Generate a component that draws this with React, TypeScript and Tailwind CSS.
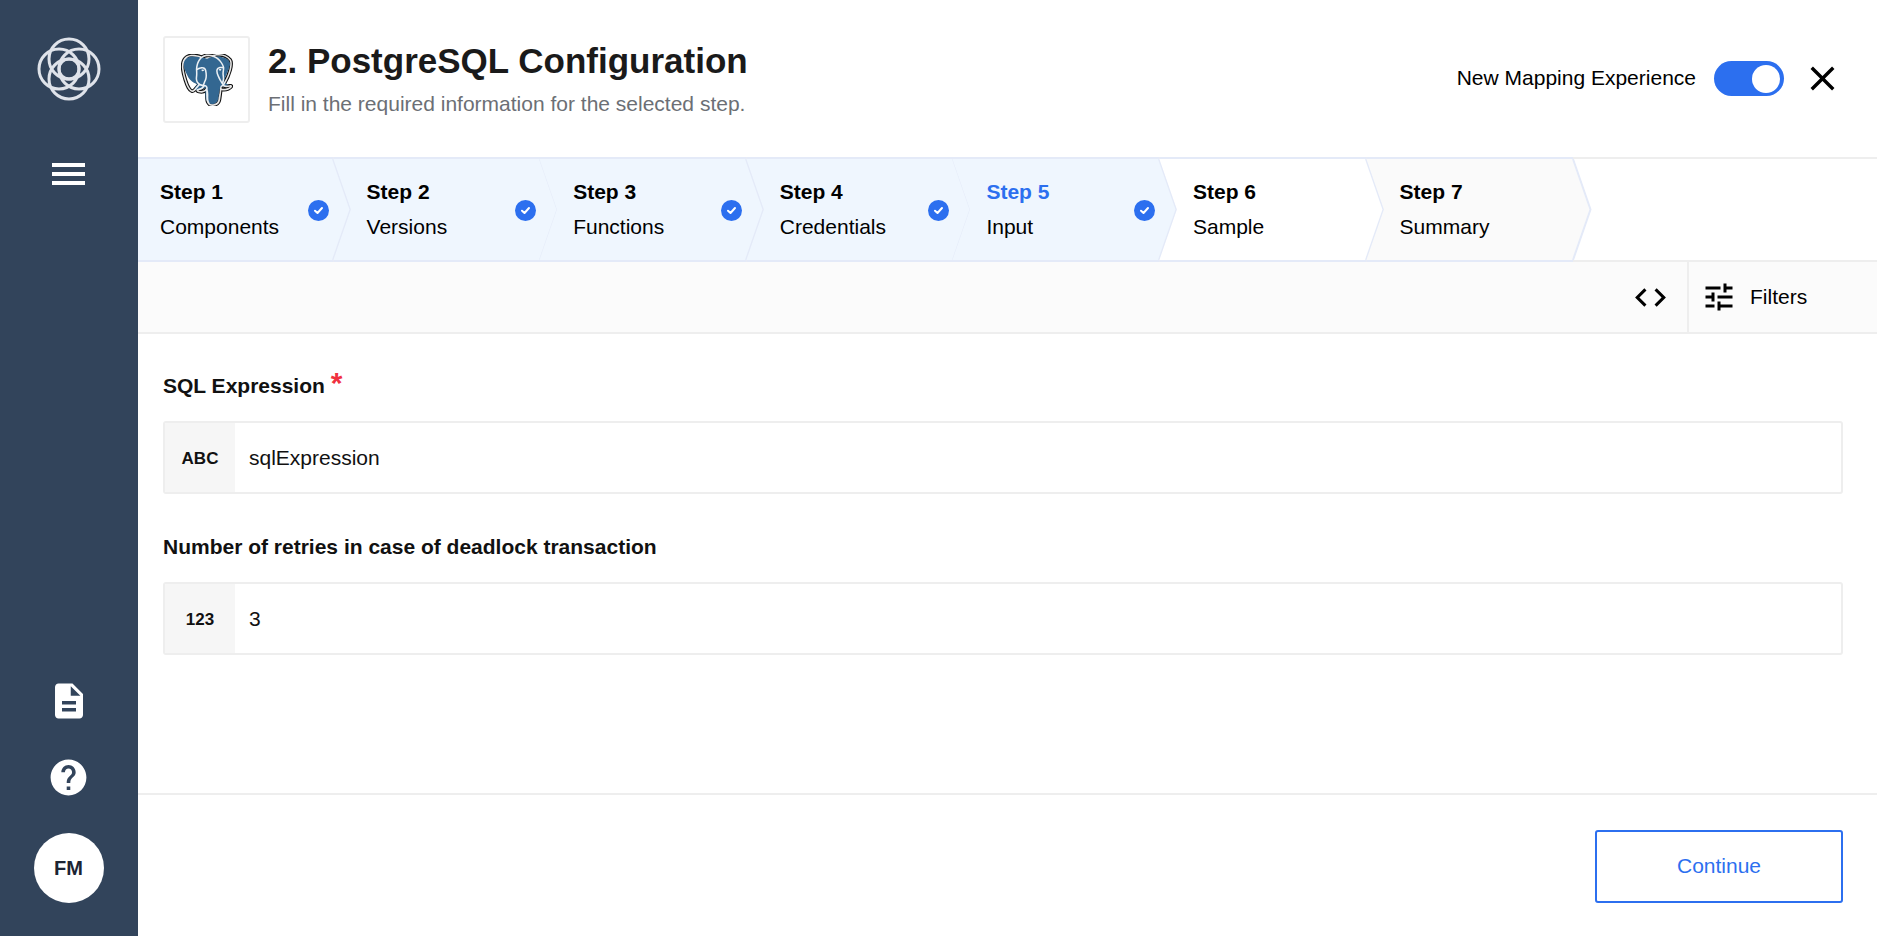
import { MdClose, MdCode, MdDescription, MdHelp, MdTune } from "react-icons/md";
import { SiPostgresql } from "react-icons/si";

type Step = {
  title: string;
  name: string;
  fill: string;
  done: boolean;
  active?: boolean;
};

const STEPS: Step[] = [
  { title: "Step 1", name: "Components", fill: "#eff6fe", done: true },
  { title: "Step 2", name: "Versions", fill: "#eff6fe", done: true },
  { title: "Step 3", name: "Functions", fill: "#eff6fe", done: true },
  { title: "Step 4", name: "Credentials", fill: "#eff6fe", done: true },
  { title: "Step 5", name: "Input", fill: "#eff6fe", done: true, active: true },
  { title: "Step 6", name: "Sample", fill: "#ffffff", done: false },
  { title: "Step 7", name: "Summary", fill: "#fafafa", done: false },
];

function RingsLogo() {
  return (
    <svg width="64" height="64" viewBox="0 0 64 64" fill="none" stroke="#dfe3ea" strokeWidth="3">
      <circle cx="32" cy="22" r="20" />
      <circle cx="32" cy="42" r="20" />
      <circle cx="22" cy="32" r="20" />
      <circle cx="42" cy="32" r="20" />
      <circle cx="32" cy="32" r="10" />
    </svg>
  );
}

function Elephant() {
  return (
    <div className="relative h-[52px] w-[52px]">
      <SiPostgresql size={52} className="absolute left-0 top-0 text-[#111111] [stroke:#111111] [stroke-width:1px]" />
      <svg className="absolute left-0 top-0" width="52" height="52" viewBox="0 0 54 54">
        <path
          d="M9 3C14 2 21 3 27 5C32 3 37 2 42 3C48 4 51 7 51 11C50 16 47 21 45 27C45 30 46 31 49 31.500C48 33 45 34 41 34C40 38 39 42 39 46C38 50 36 52 32 52C28 52 26 49 25.500 45C25 41 25.500 38 25.500 35C22 36 18 38 15 37C14 36 14 35 15 34C16 33 17 32 17 31C12 30 8 26 6 21C4 17 2 12 3 8C3.500 5 6 3.500 9 3Z"
          fill="#336791"
        />
      </svg>
      <SiPostgresql size={52} className="absolute left-0 top-0 text-white opacity-90" />
    </div>
  );
}

function StepCheck() {
  return (
    <span className="absolute left-[170px] top-[41px] flex h-[21px] w-[21px] items-center justify-center rounded-full bg-[#2c6fef]">
      <svg width="11" height="11" viewBox="0 0 11 11" fill="none" stroke="#ffffff" strokeWidth="2" strokeLinecap="round" strokeLinejoin="round">
        <path d="M2 5.700L4.500 8L9 3" />
      </svg>
    </span>
  );
}

function StepItem({ step, first }: { step: Step; first: boolean }) {
  const left = first ? 0 : -11.6;
  const notch = first ? "" : "5.900,50.500";
  const points = `${left},0 195,0 212.500,50.500 195,101 ${left},101 ${notch}`;

  return (
    <div className="relative h-full w-[206.6px] shrink-0 pl-[22px] pt-[20px]">
      <svg className="absolute left-0 top-0 overflow-visible" width="212" height="101" fill="none">
        <polygon points={points} fill={step.fill} />
        <path d={`M${left} -1H195M${left} 102H195`} stroke="#e4eaf8" strokeWidth="2" />
        <path d="M195 0L212.500 50.500L195 101" stroke="#e4eaf8" strokeWidth="2" />
      </svg>
      <div className={`relative text-[21px] font-bold leading-[26px] ${step.active ? "text-[#2c6fef]" : "text-black"}`}>
        {step.title}
      </div>
      <div className="relative mt-[9px] text-[21px] leading-[26px] text-black">{step.name}</div>
      {step.done ? <StepCheck /> : null}
    </div>
  );
}

function Field({ label, tag, value, required }: { label: string; tag: string; value: string; required?: boolean }) {
  return (
    <div>
      <div className="flex h-[26px] items-center text-[21px] font-bold text-[#111111]">
        {label}
        {required ? <span className="relative top-[-3px] ml-[6px] text-[30px] font-bold leading-none text-[#f0313f]">*</span> : null}
      </div>
      <div className="mt-[22px] flex h-[73px] overflow-hidden rounded-[3px] border-2 border-[#eeeeee]">
        <div className="flex w-[70px] shrink-0 items-center justify-center bg-[#f6f6f6] pt-[3px] text-[17px] font-bold text-[#111111]">
          {tag}
        </div>
        <div className="flex flex-1 items-center pl-[14px] text-[21px] text-[#111111]">{value}</div>
      </div>
    </div>
  );
}

export default function App() {
  return (
    <div className="flex h-screen w-full overflow-hidden bg-white font-['Liberation_Sans',Arial,sans-serif]">
      <aside className="flex w-[138px] shrink-0 flex-col items-center bg-[#32445b] pb-[33px] pr-[1px] pt-[37px]">
        <RingsLogo />
        <div className="mt-[62px] flex w-[33px] flex-col gap-[5px]">
          <div className="h-[4px] bg-white" />
          <div className="h-[4px] bg-white" />
          <div className="h-[4px] bg-white" />
        </div>
        <div className="mt-auto flex flex-col items-center">
          <MdDescription size={42} className="text-white" />
          <MdHelp size={43} className="mt-[34px] text-white" />
          <div className="mt-[34px] flex h-[70px] w-[70px] items-center justify-center rounded-full bg-white text-[20px] font-bold text-[#1c2433]">
            FM
          </div>
        </div>
      </aside>

      <main className="flex min-w-0 flex-1 flex-col">
        <header className="flex h-[157px] shrink-0 items-center pl-[25px] pr-[34px]">
          <div className="mt-[2px] flex h-[87px] w-[87px] items-center justify-center rounded-[3px] border-2 border-[#eeeeee]">
            <Elephant />
          </div>
          <div className="ml-[18px]">
            <h1 className="text-[35px] font-bold leading-[40px] text-[#1a1a1a]">2. PostgreSQL Configuration</h1>
            <p className="mt-[11px] text-[21px] leading-[24px] text-[#6c6f75]">
              Fill in the required information for the selected step.
            </p>
          </div>
          <div className="ml-auto flex items-center">
            <span className="mt-[-2px] text-[21px] text-black">New Mapping Experience</span>
            <div className="ml-[18px] flex h-[35px] w-[70px] items-center justify-end rounded-full bg-[#2c6fef] pr-[4px]">
              <div className="h-[28px] w-[28px] rounded-full bg-white" />
            </div>
            <MdClose size={41} className="ml-[18px] text-black" />
          </div>
        </header>

        <nav className="flex h-[105px] shrink-0 border-y-2 border-[#eeeeee]">
          {STEPS.map((step, i) => (
            <StepItem key={step.title} step={step} first={i === 0} />
          ))}
        </nav>

        <div className="flex h-[72px] shrink-0 items-center justify-end border-b-2 border-[#eeeeee] bg-[#fbfbfb]">
          <MdCode size={37} className="mr-[18px] text-black" />
          <div className="flex h-full w-[190px] items-center border-l-2 border-[#eeeeee] pl-[12px]">
            <MdTune size={36} className="text-black" />
            <span className="ml-[13px] text-[21px] text-black">Filters</span>
          </div>
        </div>

        <section className="flex flex-1 flex-col gap-[40px] pl-[25px] pr-[34px] pt-[39px]">
          <Field label="SQL Expression" tag="ABC" value="sqlExpression" required />
          <Field label="Number of retries in case of deadlock transaction" tag="123" value="3" />
        </section>

        <footer className="flex h-[143px] shrink-0 justify-end border-t-2 border-[#eeeeee] pr-[34px] pt-[35px]">
          <button className="h-[73px] w-[248px] rounded-[3px] border-2 border-[#2c6fef] pb-[2px] text-[21px] text-[#2c6fef]">
            Continue
          </button>
        </footer>
      </main>
    </div>
  );
}
